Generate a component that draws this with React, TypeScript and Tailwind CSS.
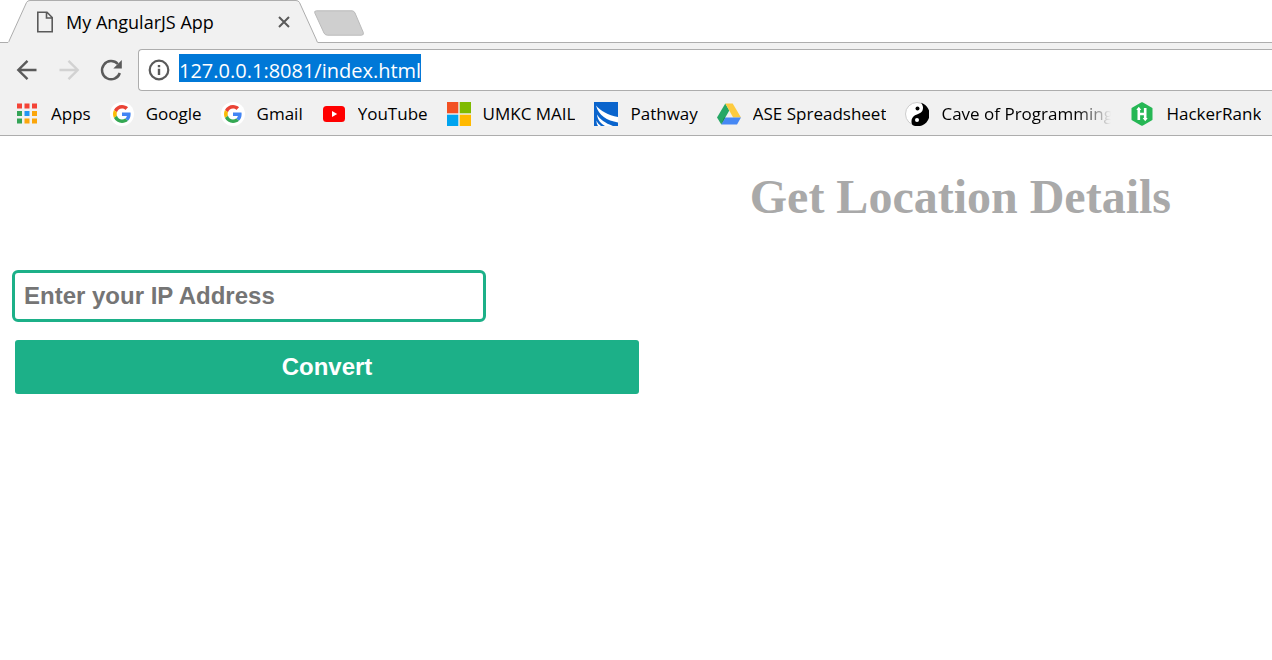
import type { ReactNode } from "react";

const AppsIcon = () => (
  <svg viewBox="0 0 24 24" className="size-6" aria-hidden="true">
    <path fill="#f44336" d="M2 1.500h5v5H2zM9.500 1.500h5v5h-5zM17 1.500h5v5h-5z" />
    <path fill="#34a457" d="M2 9h5v5H2zM2 16.500h5v5H2z" />
    <path fill="#2196f3" d="M9.500 9h5v5h-5z" />
    <path fill="#fba60b" d="M17 9h5v5h-5zM17 16.500h5v5h-5zM9.500 16.500h5v5h-5z" />
  </svg>
);

const GoogleIcon = () => (
  <svg viewBox="0 0 24 24" className="size-6" aria-hidden="true">
    <circle cx="12" cy="12" r="12" fill="#fff" />
    <g transform="translate(3 3) scale(0.375)">
      <path fill="#ea4335" d="M24 9.500c3.540 0 6.710 1.220 9.210 3.600l6.850-6.850C35.900 2.380 30.470 0 24 0 14.620 0 6.510 5.380 2.560 13.220l7.980 6.190C12.430 13.720 17.740 9.500 24 9.500z" />
      <path fill="#4285f4" d="M46.980 24.550c0-1.570-.15-3.090-.38-4.550H24v9.020h12.940c-.58 2.960-2.260 5.480-4.780 7.180l7.730 6c4.510-4.180 7.090-10.360 7.090-17.650z" />
      <path fill="#fbbc05" d="M10.530 28.590c-.48-1.450-.76-2.990-.76-4.590s.27-3.140.76-4.590l-7.980-6.190C.92 16.460 0 20.120 0 24c0 3.880.92 7.540 2.560 10.780l7.970-6.190z" />
      <path fill="#34a853" d="M24 48c6.480 0 11.930-2.130 15.890-5.810l-7.730-6c-2.150 1.450-4.920 2.300-8.160 2.300-6.260 0-11.570-4.220-13.470-9.910l-7.980 6.190C6.510 42.620 14.620 48 24 48z" />
    </g>
  </svg>
);

const YouTubeIcon = () => (
  <svg viewBox="0 0 24 24" className="size-6" aria-hidden="true">
    <rect x="1" y="4" width="22" height="16" rx="3.500" fill="#f00" />
    <path fill="#fff" d="M10 9v6l5.200-3z" />
  </svg>
);

const MicrosoftIcon = () => (
  <svg viewBox="0 0 24 24" className="size-6" aria-hidden="true">
    <path fill="#f25022" d="M0 0h11.300v11.300H0z" />
    <path fill="#7fba00" d="M12.700 0H24v11.300H12.700z" />
    <path fill="#00a4ef" d="M0 12.700h11.300V24H0z" />
    <path fill="#ffb900" d="M12.700 12.700H24V24H12.700z" />
  </svg>
);

const PathwayIcon = () => (
  <svg viewBox="0 0 24 24" className="size-6" aria-hidden="true">
    <path fill="#0a64cc" d="M0 0h24v24H0z" />
    <path fill="#fff" d="M2 3.500C6.500 9 14 13 24 15V20.500C13 18.500 4.500 13.500 2 3.500z" />
    <path fill="#fff" d="M3 12.500C6 17.500 11 21 19 24H11C7 21.500 3.500 18 3 12.500z" />
    <path fill="#fff" d="M2.500 18.500C3.500 21 5 22.500 7 24H4C3 22.500 2.500 21 2.500 18.500z" />
  </svg>
);

const DriveIcon = () => (
  <svg viewBox="0 0 24 24" className="size-6" aria-hidden="true">
    <path fill="#26a766" d="M8.300 1.500 12.300 8.500 4.300 22.500 0 15.500z" />
    <path fill="#fdcb3f" d="M8.300 1.500h7.400L24 15.500h-7.800z" />
    <path fill="#4688f4" d="M8.200 15.500H24l-4 7H4.300z" />
    <path fill="#1b7e4d" d="M8.200 15.500 4.300 22.500 7 15.500z" />
  </svg>
);

const YinYangIcon = () => (
  <svg viewBox="0 0 24 24" className="size-6" aria-hidden="true">
    <circle cx="12" cy="12" r="11.500" fill="#fff" stroke="#ccc" />
    <path fill="#000" d="M16 .7A12 12 0 1 1 8 23.300C5.500 21 6 15.500 10 13.300c2.500-1.300 6-1.800 7.300-4.300C18.700 6 18 3 16 .7z" />
    <circle cx="12.500" cy="6.500" r="2" fill="#000" />
    <circle cx="12" cy="18" r="2" fill="#fff" />
  </svg>
);

const HackerRankIcon = () => (
  <svg viewBox="0 0 24 24" className="size-6" aria-hidden="true">
    <path fill="#26b755" stroke="#26b755" strokeWidth="2" strokeLinejoin="round" d="M12 1.200 21.500 6.600v10.800L12 22.800 2.500 17.400V6.600z" />
    <path fill="none" stroke="#fff" strokeWidth="2.600" d="M8.800 6.500v11.500M15.200 6v11.500M8.800 12h6.400" />
    <path fill="#fff" d="M6.300 8 8.800 4.800 11.300 8zM12.700 16h5l-2.500 3.200z" />
  </svg>
);

const bookmarks: { label: string; icon: ReactNode; clipped?: boolean }[] = [
  { label: "Apps", icon: <AppsIcon /> },
  { label: "Google", icon: <GoogleIcon /> },
  { label: "Gmail", icon: <GoogleIcon /> },
  { label: "YouTube", icon: <YouTubeIcon /> },
  { label: "UMKC MAIL", icon: <MicrosoftIcon /> },
  { label: "Pathway", icon: <PathwayIcon /> },
  { label: "ASE Spreadsheet", icon: <DriveIcon /> },
  { label: "Cave of Programming", icon: <YinYangIcon />, clipped: true },
  { label: "HackerRank", icon: <HackerRankIcon /> },
];

function TabStrip() {
  return (
    <div className="flex h-[43px] items-stretch bg-white">
      <div className="w-2 shrink-0 border-b border-[#adadad]" />
      <div className="relative flex w-[310px] shrink-0 items-center pr-[26px] pl-7">
        <svg viewBox="0 0 310 43" className="absolute inset-0 size-full" aria-hidden="true">
          <path fill="#f1f1f1" d="M0 43 1.500 40 18.500 2.500Q19.500.5 22 .5H288Q290.500.5 291.500 2.500L308.500 40 310 43z" />
          <path fill="none" stroke="#adadad" d="M0 42.500Q1 42 1.500 40L18.500 2.500Q19.500.5 22 .5H288Q290.500.5 291.500 2.500L308.500 40Q309 42.500 310 42.500" />
        </svg>
        <svg viewBox="0 0 18 22" className="relative h-[22px] w-[18px]" fill="none" stroke="#5a5a5a" strokeWidth="1.600" aria-hidden="true">
          <path d="M1.800 1.300H11L16.200 6.500V20.700H1.800zM10.500 1.300V7H16.200" />
        </svg>
        <span className="relative ml-3 flex-1 font-['Open_Sans',sans-serif] text-[18px] leading-6 text-black">My AngularJS App</span>
        <button type="button" aria-label="Close tab" className="relative size-4">
          <svg viewBox="0 0 16 16" className="size-4" stroke="#5a5a5a" strokeWidth="2" aria-hidden="true">
            <path d="M3 3 13 13M13 3 3 13" />
          </svg>
        </button>
      </div>
      <div className="flex flex-1 items-center border-b border-[#adadad] pt-1">
        <button type="button" aria-label="New tab" className="-ml-1 h-[26px] w-[50px]">
          <svg viewBox="0 0 50 26" className="h-[26px] w-[50px]" aria-hidden="true">
            <path fill="#cfcfcf" stroke="#bababa" d="M2.500.8H38Q40 .8 41 3L49.300 22.500Q50 25.200 47.500 25.200H13.500Q11 25.200 10 23L.8 3Q0 .8 2.500.8z" />
          </svg>
        </button>
      </div>
    </div>
  );
}

function Toolbar() {
  return (
    <div className="flex items-center pt-[6px]">
      <div className="flex w-[138px] shrink-0 items-center gap-[18px] pl-[15px]">
        <button type="button" aria-label="Back" className="size-6">
          <svg viewBox="0 0 24 24" className="size-6" fill="none" stroke="#5a5a5a" strokeWidth="2.400" aria-hidden="true">
            <path d="M21.500 12H3.500M12.500 2.800 3.300 12 12.500 21.200" />
          </svg>
        </button>
        <button type="button" aria-label="Forward" className="size-6">
          <svg viewBox="0 0 24 24" className="size-6" fill="none" stroke="#d2d2d2" strokeWidth="2.400" aria-hidden="true">
            <path d="M2.500 12H20.500M11.500 2.800 20.700 12 11.500 21.200" />
          </svg>
        </button>
        <button type="button" aria-label="Reload" className="size-6">
          <svg viewBox="0 0 24 24" className="size-6" aria-hidden="true">
            <path fill="none" stroke="#5a5a5a" strokeWidth="2.500" d="M20.800 15A9.100 9.100 0 1 1 18.800 6" />
            <path fill="#5a5a5a" d="M22.800 2v8.500h-8.500z" />
          </svg>
        </button>
      </div>
      <div className="flex h-[42px] flex-1 items-center rounded-l-[4px] border border-r-0 border-[#adadad] bg-white pl-[9px]">
        <svg viewBox="0 0 22 22" className="size-[22px] shrink-0" aria-hidden="true">
          <circle cx="11" cy="11" r="9.300" fill="none" stroke="#5a5a5a" strokeWidth="2.200" />
          <path fill="#5a5a5a" d="M9.800 9.800h2.400V16H9.800zM9.800 6h2.400v2.300H9.800z" />
        </svg>
        <input
          type="text"
          aria-label="Address"
          defaultValue="127.0.0.1:8081/index.html"
          className="mb-1 ml-[9px] field-sizing-content h-7 bg-[#0078d7] pt-1 font-['Open_Sans',sans-serif] text-[20px] leading-6 text-white outline-none"
        />
      </div>
    </div>
  );
}

function BookmarksBar() {
  return (
    <nav aria-label="Bookmarks" className="flex h-11 items-center gap-[19px] overflow-hidden pt-px pl-[15px]">
      {bookmarks.map(({ label, icon, clipped }) => (
        <a key={label} href="#" className="flex shrink-0 items-center gap-3">
          {icon}
          <span
            className={
              "overflow-hidden font-['Open_Sans',sans-serif] text-[17px] leading-6 whitespace-nowrap text-black" +
              (clipped ? " w-[170px] mask-r-from-80% mask-r-to-100%" : "")
            }
          >
            {label}
          </span>
        </a>
      ))}
    </nav>
  );
}

export default function App() {
  return (
    <div className="min-h-screen overflow-x-hidden bg-white">
      <header className="border-b border-[#adadad] bg-[#f1f1f1]">
        <TabStrip />
        <Toolbar />
        <BookmarksBar />
      </header>
      <main className="px-3 pt-[33px]">
        <h1 className="pr-[89px] text-right font-['Liberation_Serif',serif] text-[48px] leading-[56px] font-bold text-[#a9a9a9]">
          Get Location Details
        </h1>
        <form className="pt-[45px]" onSubmit={(e) => e.preventDefault()}>
          <input
            type="text"
            aria-label="IP address"
            placeholder="Enter your IP Address"
            className="block h-[52px] w-[474px] rounded-[6px] border-3 border-[#1cb088] px-[9px] font-['Liberation_Sans',sans-serif] text-[24px] font-bold placeholder:text-[#757575]"
          />
          <button
            type="submit"
            className="mt-[18px] ml-[3px] block h-[54px] w-1/2 rounded-[3px] bg-[#1cb088] font-['Liberation_Sans',sans-serif] text-[24px] font-bold text-white"
          >
            Convert
          </button>
        </form>
      </main>
    </div>
  );
}
